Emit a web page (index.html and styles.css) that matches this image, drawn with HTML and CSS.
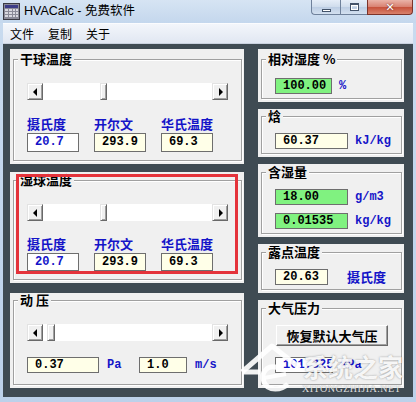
FILE: index.html
```html
<!DOCTYPE html>
<html lang="zh">
<head>
<meta charset="utf-8">
<title>HVACalc</title>
<link rel="stylesheet" href="styles.css">
</head>
<body>
<div class="window">
  <div class="titlebar">
    <svg class="app-icon" width="17" height="17" viewBox="0 0 17 17">
      <rect x="0.5" y="0.5" width="16" height="16" fill="#8a8a98" stroke="#3a3a44"/>
      <rect x="2" y="2" width="13" height="3" fill="#3b3b86"/>
      <g fill="#d8d8e0">
        <rect x="2" y="6" width="3" height="2"/><rect x="6" y="6" width="3" height="2"/><rect x="10" y="6" width="2" height="2"/><rect x="13" y="6" width="2" height="2"/>
        <rect x="2" y="9" width="3" height="2"/><rect x="6" y="9" width="3" height="2"/><rect x="10" y="9" width="2" height="2"/><rect x="13" y="9" width="2" height="2"/>
        <rect x="2" y="12" width="3" height="2"/><rect x="6" y="12" width="3" height="2"/><rect x="10" y="12" width="2" height="2"/><rect x="13" y="12" width="2" height="2"/>
      </g>
    </svg>
    <span class="title">HVACalc - 免费软件</span>
    <div class="caps">
      <div class="cap cap-min"><span class="min-glyph"></span></div>
      <div class="cap cap-max"><span class="max-glyph"></span></div>
      <div class="cap cap-close">✕</div>
    </div>
  </div>
  <div class="menubar">
    <span class="menu-item">文件</span>
    <span class="menu-item">复制</span>
    <span class="menu-item">关于</span>
  </div>
  <div class="client">
    <div class="col">
      <div class="panel p-dry">
        <fieldset class="group">
          <legend>干球温度</legend>
          <div class="gb-body">
            <div class="scrollbar">
              <div class="sb-btn"><span class="arr-l"></span></div>
              <div class="sb-track"><div class="sb-space sp-57"></div><div class="sb-thumb"></div></div>
              <div class="sb-btn"><span class="arr-r"></span></div>
            </div>
            <div class="temps">
              <div class="temp"><div class="lbl">摄氏度</div><div class="val v-white v-blue">20.7</div></div>
              <div class="temp"><div class="lbl">开尔文</div><div class="val v-cream">293.9</div></div>
              <div class="temp"><div class="lbl">华氏温度</div><div class="val v-cream">69.3</div></div>
            </div>
          </div>
        </fieldset>
      </div>
      <div class="panel p-wet">
        <fieldset class="group">
          <legend>湿球温度</legend>
          <div class="gb-body">
            <div class="scrollbar">
              <div class="sb-btn"><span class="arr-l"></span></div>
              <div class="sb-track"><div class="sb-space sp-57"></div><div class="sb-thumb"></div></div>
              <div class="sb-btn"><span class="arr-r"></span></div>
            </div>
            <div class="temps">
              <div class="temp"><div class="lbl">摄氏度</div><div class="val v-white v-blue">20.7</div></div>
              <div class="temp"><div class="lbl">开尔文</div><div class="val v-cream">293.9</div></div>
              <div class="temp"><div class="lbl">华氏温度</div><div class="val v-cream">69.3</div></div>
            </div>
          </div>
        </fieldset>
      </div>
      <div class="panel p-dyn">
        <fieldset class="group">
          <legend>动 压</legend>
          <div class="gb-body">
            <div class="scrollbar">
              <div class="sb-btn"><span class="arr-l"></span></div>
              <div class="sb-track"><div class="sb-space sp-4"></div><div class="sb-thumb thumb-wide"></div></div>
              <div class="sb-btn"><span class="arr-r"></span></div>
            </div>
            <div class="row">
              <div class="val v-cream w-72">0.37</div><span class="unit u-pa">Pa</span>
              <div class="val v-cream w-48">1.0</div><span class="unit">m/s</span>
            </div>
          </div>
        </fieldset>
      </div>
    </div>
    <div class="col">
      <div class="panel p-rh">
        <fieldset class="group">
          <legend>相对湿度 %</legend>
          <div class="gb-body">
            <div class="row"><div class="val v-green w-57">100.00</div><span class="unit">%</span></div>
          </div>
        </fieldset>
      </div>
      <div class="panel p-h">
        <fieldset class="group">
          <legend>焓</legend>
          <div class="gb-body">
            <div class="row"><div class="val v-cream w-73">60.37</div><span class="unit">kJ/kg</span></div>
          </div>
        </fieldset>
      </div>
      <div class="panel p-d">
        <fieldset class="group">
          <legend>含湿量</legend>
          <div class="gb-body">
            <div class="row"><div class="val v-green w-73">18.00</div><span class="unit">g/m3</span></div>
            <div class="row row-2"><div class="val v-green w-73">0.01535</div><span class="unit">kg/kg</span></div>
          </div>
        </fieldset>
      </div>
      <div class="panel p-dew">
        <fieldset class="group">
          <legend>露点温度</legend>
          <div class="gb-body">
            <div class="row"><div class="val v-cream w-53">20.63</div><span class="unit-cjk">摄氏度</span></div>
          </div>
        </fieldset>
      </div>
      <div class="panel p-atm">
        <fieldset class="group">
          <legend>大气压力</legend>
          <div class="gb-body">
            <button class="btn" type="button">恢复默认大气压</button>
            <div class="row row-atm"><div class="val v-white v-blue w-58">101.325</div><span class="unit">kPa</span></div>
          </div>
        </fieldset>
      </div>
    </div>
  </div>
  <div class="highlight"></div>
  <div class="watermark">
    <svg class="wm-logo" width="66" height="60" viewBox="0 0 66 60">
      <path d="M4 34 L34 8 L62 30" fill="none" stroke="#fff" stroke-width="5" stroke-linejoin="round" opacity="0.92"/>
      <path d="M4 34 L22 34" fill="none" stroke="#fff" stroke-width="5" opacity="0.92"/>
      <path d="M40 30 C30 26 22 34 26 44 C30 54 44 52 50 46" fill="none" stroke="#fff" stroke-width="5" opacity="0.9"/>
      <path d="M26 40 L48 36" fill="none" stroke="#fff" stroke-width="4" opacity="0.9"/>
    </svg>
    <span class="wm-text">系统之家</span>
    <span class="wm-url">XITONGZHIJIA.NET</span>
  </div>
</div>
</body>
</html>
```
FILE: styles.css
```css
* { box-sizing: border-box; }
html, body { margin: 0; padding: 0; }
body {
  width: 416px;
  height: 402px;
  overflow: hidden;
  font-family: "Noto Sans CJK SC", "Liberation Sans", sans-serif;
  background: #c3d5ea;
}
.window {
  position: relative;
  width: 416px;
  height: 402px;
  display: flex;
  flex-direction: column;
  padding: 0 3px 5px;
  background: linear-gradient(#c9dbef, #bcd1ea);
}

/* title bar */
.titlebar {
  height: 23px;
  margin: 0 -3px;
  padding-left: 3px;
  display: flex;
  align-items: flex-start;
  background: linear-gradient(#d6e4f3, #c4d7ed);
}
.app-icon { margin-top: 3px; flex: none; }
.title {
  margin-left: 4px;
  margin-top: 3px;
  font-family: "Liberation Sans", "Noto Sans CJK SC", sans-serif;
  font-size: 12.5px;
  line-height: 16px;
  color: #000;
}
.caps { display: flex; margin-left: auto; margin-right: 3px; height: 15px; }
.cap {
  height: 15px;
  border: 1px solid #6f819b;
  border-top: none;
  background: linear-gradient(#e6eef8, #cfdcec 50%, #bccde3 51%, #d3e0f0);
  display: flex;
  align-items: center;
  justify-content: center;
}
.cap-min { width: 29px; border-radius: 0 0 0 4px; border-right: none; }
.cap-max { width: 27px; border-right: none; }
.cap-close {
  width: 46px;
  border-color: #7c3329;
  border-radius: 0 0 4px 0;
  background: linear-gradient(#eab3a8, #d88070 50%, #c6503a 51%, #d9826c);
  color: #fff;
  font-family: "DejaVu Sans", sans-serif;
  font-size: 11px;
  font-weight: bold;
  text-shadow: 0 0 2px #5a1a10;
}
.min-glyph { width: 9px; height: 3px; margin-top: 6px; background: #fff; border: 1px solid #43536a; }
.max-glyph { width: 9px; height: 8px; border: 1px solid #43536a; border-top-width: 2px; background: transparent; box-shadow: inset 0 0 0 1px #fff; }

/* menu bar */
.menubar {
  height: 21px;
  display: flex;
  align-items: center;
  background: linear-gradient(#f3f6fb, #e1e7f2);
  border-top: 1px solid #fbfcfe;
  border-bottom: 1px solid #c9d1de;
}
.menu-item {
  padding: 0 7px;
  font-size: 12px;
  line-height: 16px;
  color: #000;
}

/* client area */
.client {
  flex: 1;
  background: #3f4b53;
  padding: 5px 9px 9px 7px;
  display: grid;
  grid-template-columns: 234px 146px;
  column-gap: 14px;
  align-items: start;
}
.col { display: flex; flex-direction: column; }

.panel {
  background: #f0f0f0;
  display: flex;
  flex-direction: column;
  padding: 0 2px 3px 3px;
}
.p-dry { height: 115px; padding-top: 3px; }
.p-wet { height: 111px; margin-top: 8px; padding-top: 1px; }
.p-dyn { height: 95px; margin-top: 10px; padding-top: 0; }
.p-rh { height: 53px; padding-top: 3px; }
.p-h { height: 48px; margin-top: 7px; padding-top: 0; }
.p-d { height: 73px; margin-top: 7px; padding-top: 1px; }
.p-dew { height: 49px; margin-top: 7px; padding-top: 1px; }
.p-atm { height: 88px; margin-top: 7px; padding-top: 1px; }

.group {
  flex: 1;
  margin: 0;
  padding: 0;
  min-width: 0;
  border: 1px solid #a0a0a0;
  box-shadow: 1px 1px 0 #fff, inset 1px 1px 0 #fff;
}
.group legend {
  margin-left: 4px;
  padding: 0 2px;
  font-size: 13px;
  font-weight: bold;
  line-height: 14px;
  color: #000;
  background: #f0f0f0;
}
.gb-body { padding: 0 13px 0 13px; }

/* scrollbar */
.scrollbar { height: 17px; display: flex; margin-top: 17px; }
.sb-btn, .sb-thumb {
  background: #f0f0f0;
  border: 1px solid;
  border-color: #e3e3e3 #696969 #696969 #e3e3e3;
  box-shadow: inset 1px 1px 0 #fff, inset -1px -1px 0 #a0a0a0;
}
.sb-btn { width: 16px; flex: none; display: flex; align-items: center; justify-content: center; }
.arr-l { width: 0; height: 0; border-top: 4px solid transparent; border-bottom: 4px solid transparent; border-right: 4px solid #000; margin-right: 1px; }
.arr-r { width: 0; height: 0; border-top: 4px solid transparent; border-bottom: 4px solid transparent; border-left: 4px solid #000; margin-left: 1px; }
.sb-track { flex: 1; display: flex; background: #fff; }
.sb-space { flex: none; }
.sp-57 { width: 57px; }
.sp-4 { width: 4px; }
.sb-thumb { width: 7px; flex: none; }
.thumb-wide { width: 8px; }

/* temperatures */
.temps { display: flex; margin-top: 16px; }
.p-wet .temps { margin-top: 15px; }
.temp { width: 57px; margin-right: 15px; }
.lbl {
  font-size: 13px;
  font-weight: bold;
  line-height: 16px;
  color: #1414c8;
  white-space: nowrap;
}
.val {
  height: 19px;
  margin-top: 1px;
  border: 1px solid #6e6e6e;
  padding-left: 7px;
  font-family: "Liberation Mono", monospace;
  font-size: 12px;
  font-weight: bold;
  line-height: 17px;
  color: #000;
  white-space: nowrap;
  flex: none;
}
.p-wet .val { height: 18px; line-height: 16px; }
.v-white { background: #fff; }
.v-cream { background: #ffffe8; }
.v-green { background: #80f280; }
.v-blue { color: #1414c8; }
.w-72 { width: 72px; }
.w-48 { width: 48px; }
.w-57 { width: 57px; }
.w-73 { width: 73px; }
.w-53 { width: 53px; }
.w-58 { width: 58px; }

.row { display: flex; align-items: center; margin-top: 10px; }
.row .val { height: 16px; line-height: 14px; margin-top: 0; }
.p-dyn .row { margin-top: 16px; }
.p-rh .row { margin-top: 12px; }
.row-2 { margin-top: 8px; }
.row-atm { margin-top: 11px; }
.unit {
  margin-left: 7px;
  font-family: "Liberation Mono", monospace;
  font-size: 12px;
  font-weight: bold;
  line-height: 14px;
  color: #1414c8;
}
.u-pa { width: 32px; margin-left: 8px; }
.p-dyn .unit { margin-left: 8px; }
.unit-cjk {
  margin-left: 19px;
  font-size: 13px;
  font-weight: bold;
  line-height: 16px;
  color: #1414c8;
}

.btn {
  display: block;
  margin: 10px 0 0 1px;
  width: 112px;
  height: 21px;
  padding: 0;
  background: #f0f0f0;
  border: 1px solid;
  border-color: #fff #696969 #696969 #fff;
  box-shadow: inset -1px -1px 0 #a0a0a0;
  font-family: "Noto Sans CJK SC", sans-serif;
  font-size: 13px;
  font-weight: bold;
  line-height: 18px;
  color: #000;
}

/* red highlight overlay */
.highlight {
  position: absolute;
  left: 16px;
  top: 174px;
  width: 222px;
  height: 100px;
  border: 3px solid #e4333b;
}

/* watermark overlay */
.watermark { position: absolute; left: 0; top: 0; width: 416px; height: 402px; pointer-events: none; }
.wm-logo { position: absolute; left: 238px; top: 338px; }
.wm-text {
  position: absolute;
  left: 303px;
  top: 350px;
  font-size: 25px;
  font-weight: bold;
  line-height: 32px;
  color: rgba(255, 255, 255, 0.92);
  text-shadow: 0 0 2px rgba(60, 60, 60, 0.5);
  letter-spacing: 0;
}
.wm-url {
  position: absolute;
  left: 302px;
  top: 383px;
  font-family: "Liberation Serif", serif;
  font-size: 10px;
  line-height: 12px;
  letter-spacing: 0.5px;
  color: rgba(255, 255, 255, 0.85);
  text-shadow: 0 0 1px rgba(60, 60, 60, 0.5);
}
```
